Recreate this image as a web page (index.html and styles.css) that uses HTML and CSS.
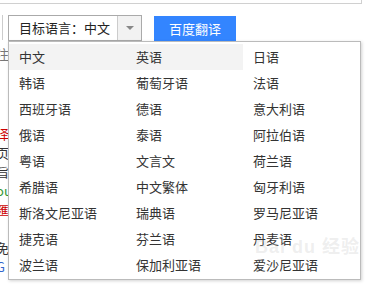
FILE: index.html
```html
<!DOCTYPE html>
<html lang="zh-CN">
<head>
    <meta charset="UTF-8">
    <meta name="viewport" content="width=device-width, initial-scale=1.0">
    <title>百度翻译</title>
    <link rel="stylesheet" href="styles.css">
</head>
<body>

<div class="page">
    <div class="top-box"></div>

    <div class="toolbar">
        <div class="prev-box"></div>
        <div class="lang-select">
            <span class="lang-label">目标语言：中文</span>
            <span class="lang-arrow"></span>
        </div>
        <button class="translate-btn">百度翻译</button>
    </div>

    <div class="side-text">
        <p class="gray">注</p>
        <p class="red gap">译</p>
        <p>页</p>
        <p>旨</p>
        <p class="green">ou</p>
        <p class="red">匯</p>
        <p>&nbsp;</p>
        <p>免</p>
        <p class="blue">G</p>
    </div>

    <div class="lang-menu">
        <ul class="lang-list">
            <li class="hover">中文</li>
            <li class="hover">英语</li>
            <li>日语</li>
            <li>韩语</li>
            <li>葡萄牙语</li>
            <li>法语</li>
            <li>西班牙语</li>
            <li>德语</li>
            <li>意大利语</li>
            <li>俄语</li>
            <li>泰语</li>
            <li>阿拉伯语</li>
            <li>粤语</li>
            <li>文言文</li>
            <li>荷兰语</li>
            <li>希腊语</li>
            <li>中文繁体</li>
            <li>匈牙利语</li>
            <li>斯洛文尼亚语</li>
            <li>瑞典语</li>
            <li>罗马尼亚语</li>
            <li>捷克语</li>
            <li>芬兰语</li>
            <li>丹麦语</li>
            <li>波兰语</li>
            <li>保加利亚语</li>
            <li>爱沙尼亚语</li>
        </ul>
        <div class="watermark">Bai<span class="du">du</span>经验</div>
    </div>
</div>

</body>
</html>
```

FILE: styles.css
```css
body {
    margin: 0;
    font-family: "Noto Sans CJK SC", "Liberation Sans", sans-serif;
    font-size: 13px;
    color: #333;
    background: #fff;
}
.page {
    position: relative;
    width: 372px;
    height: 284px;
    overflow: hidden;
}
.top-box {
    width: 362px;
    height: 4px;
    border-right: 1px solid #d0d0d0;
    border-bottom: 1px solid #d0d0d0;
    box-sizing: border-box;
}
.toolbar {
    display: flex;
    align-items: flex-start;
    margin-top: 11px;
    height: 26px;
}
.prev-box {
    width: 3px;
    height: 25px;
    border-right: 1px solid #ccc;
    box-sizing: border-box;
    margin-right: 5px;
}
.lang-select {
    display: flex;
    width: 134px;
    height: 26px;
    border: 1px solid #aaa;
    box-sizing: border-box;
    background: #fff;
}
.lang-label {
    flex: 1;
    padding-left: 10px;
    line-height: 24px;
    color: #222;
}
.lang-arrow {
    position: relative;
    width: 23px;
    background: #f2f2f2;
    border-left: 1px solid #ccc;
}
.lang-arrow::after {
    content: "";
    position: absolute;
    left: 8px;
    top: 10px;
    border-left: 4px solid transparent;
    border-right: 4px solid transparent;
    border-top: 4px solid #888;
}
.translate-btn {
    margin-left: 12px;
    margin-top: 1px;
    width: 82px;
    height: 25px;
    padding: 0;
    border: none;
    background: #3385ff;
    color: #fff;
    font-family: inherit;
    font-size: 13px;
    line-height: 25px;
}
.side-text {
    width: 8px;
    overflow: hidden;
    margin-top: 3px;
}
.side-text p {
    margin: 0;
    height: 19px;
    line-height: 19px;
    white-space: nowrap;
    margin-left: -4px;
}
.side-text .gap {
    margin-top: 61px;
}
.side-text .red {
    color: #c00;
}
.side-text .gray {
    color: #777;
}
.side-text .green {
    color: #393;
}
.side-text .blue {
    color: #36c;
}
.lang-menu {
    position: absolute;
    left: 8px;
    top: 41px;
    width: 353px;
    height: 239px;
    box-sizing: border-box;
    border: 1px solid #bbb;
    background: #fff;
    box-shadow: 1px 1px 3px rgba(0, 0, 0, 0.18);
    padding-top: 2px;
}
.lang-list {
    display: grid;
    grid-template-columns: repeat(3, 117px);
    grid-auto-rows: 26px;
    margin: 0;
    padding: 0;
    list-style: none;
}
.lang-list li {
    padding-left: 10px;
    line-height: 26px;
    color: #333;
    white-space: nowrap;
}
.lang-list li.hover {
    background: #f3f3f3;
}
.watermark {
    position: absolute;
    left: 246px;
    top: 190px;
    font-family: "Liberation Sans", "Noto Sans CJK SC", sans-serif;
    font-size: 18px;
    font-weight: bold;
    color: rgba(200, 200, 200, 0.3);
    letter-spacing: 1px;
}
.watermark .du {
    margin: 0 6px;
}
```
